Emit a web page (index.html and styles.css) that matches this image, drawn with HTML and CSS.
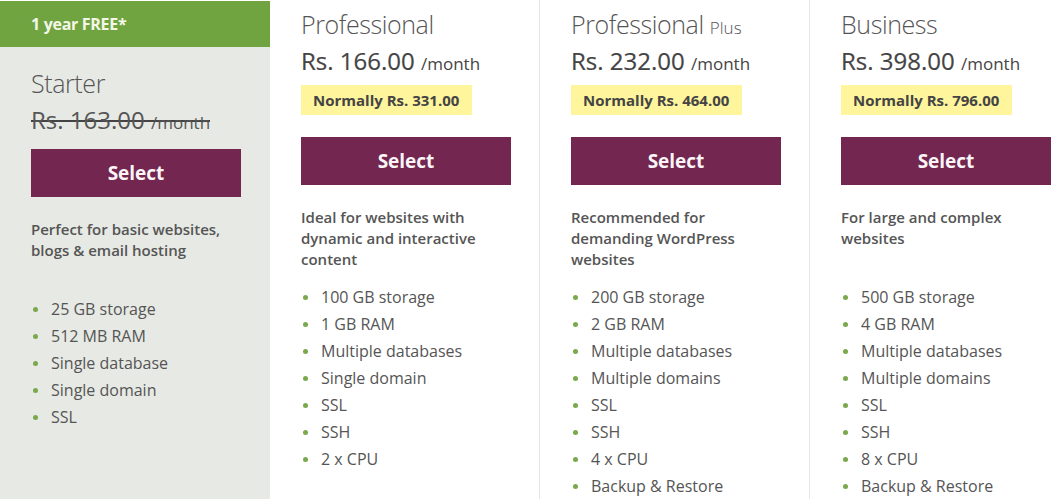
FILE: index.html
```html
<!DOCTYPE html>
<html lang="en">
<head>
<meta charset="utf-8">
<title>Hosting plans</title>
<link rel="stylesheet" href="styles.css">
</head>
<body>
<div class="plans">
  <section class="plan plan--starter">
    <div class="plan-flag">1 year FREE*</div>
    <div class="plan-body">
      <h2 class="plan-title">Starter</h2>
      <del class="plan-price plan-price--old">Rs. 163.00 <span class="per">/month</span></del>
      <a class="btn btn--tight">Select</a>
      <p class="plan-desc">Perfect for basic websites, blogs &amp; email hosting</p>
      <ul class="features">
        <li>25 GB storage</li>
        <li>512 MB RAM</li>
        <li>Single database</li>
        <li>Single domain</li>
        <li>SSL</li>
      </ul>
    </div>
  </section>
  <section class="plan plan--bordered">
    <div class="plan-body">
      <h2 class="plan-title">Professional</h2>
      <div class="plan-price">Rs. 166.00 <span class="per">/month</span></div>
      <div class="badge">Normally Rs. 331.00</div>
      <a class="btn">Select</a>
      <p class="plan-desc">Ideal for websites with dynamic and interactive content</p>
      <ul class="features">
        <li>100 GB storage</li>
        <li>1 GB RAM</li>
        <li>Multiple databases</li>
        <li>Single domain</li>
        <li>SSL</li>
        <li>SSH</li>
        <li>2 x CPU</li>
      </ul>
    </div>
  </section>
  <section class="plan plan--bordered">
    <div class="plan-body">
      <h2 class="plan-title">Professional <small>Plus</small></h2>
      <div class="plan-price">Rs. 232.00 <span class="per">/month</span></div>
      <div class="badge">Normally Rs. 464.00</div>
      <a class="btn">Select</a>
      <p class="plan-desc">Recommended for demanding WordPress websites</p>
      <ul class="features">
        <li>200 GB storage</li>
        <li>2 GB RAM</li>
        <li>Multiple databases</li>
        <li>Multiple domains</li>
        <li>SSL</li>
        <li>SSH</li>
        <li>4 x CPU</li>
        <li>Backup &amp; Restore</li>
      </ul>
    </div>
  </section>
  <section class="plan">
    <div class="plan-body">
      <h2 class="plan-title">Business</h2>
      <div class="plan-price">Rs. 398.00 <span class="per">/month</span></div>
      <div class="badge">Normally Rs. 796.00</div>
      <a class="btn">Select</a>
      <p class="plan-desc">For large and complex websites</p>
      <ul class="features">
        <li>500 GB storage</li>
        <li>4 GB RAM</li>
        <li>Multiple databases</li>
        <li>Multiple domains</li>
        <li>SSL</li>
        <li>SSH</li>
        <li>8 x CPU</li>
        <li>Backup &amp; Restore</li>
      </ul>
    </div>
  </section>
</div>
</body>
</html>
```
FILE: styles.css
```css
* { box-sizing: border-box; }
html, body {
  margin: 0;
  padding: 0;
  background: #fff;
  overflow: hidden;
  height: 499px;
}
body {
  font-family: "Open Sans", "Liberation Sans", sans-serif;
  color: #555;
}
.plans {
  display: grid;
  grid-template-columns: repeat(4, 270px);
  width: 1080px;
  min-height: 499px;
  align-items: stretch;
}
.plan {
  display: flex;
  flex-direction: column;
}
.plan--bordered {
  border-right: 1px solid #e6e6e6;
}
.plan--starter {
  background: #e7e9e4;
  border-top: 1px solid #fff;
}
.plan-flag {
  background: #70a440;
  color: #f4f7e6;
  font-weight: 700;
  font-size: 16px;
  height: 46px;
  line-height: 46px;
  padding-left: 31px;
  letter-spacing: -0.3px;
}
.plan-body {
  padding: 9px 0 0 31px;
  display: flex;
  flex-direction: column;
  align-items: flex-start;
}
.plan--starter .plan-body {
  padding-top: 21px;
}
.plan-title {
  margin: 0;
  font-size: 25px;
  font-weight: 300;
  line-height: 30px;
  height: 30px;
  color: #555;
  letter-spacing: -0.4px;
}
.plan-title small {
  font-size: 17px;
  line-height: 1;
  letter-spacing: 0;
}
.plan-price {
  display: block;
  margin-top: 7px;
  font-size: 24px;
  line-height: 30px;
  color: #444;
  -webkit-text-stroke: 0.2px #444;
}
.plan-price .per {
  font-size: 17px;
  -webkit-text-stroke: 0;
}
.plan-price--old {
  color: #555;
  text-decoration: none;
  -webkit-text-stroke: 0;
  background: linear-gradient(#444, #444) no-repeat 0 15px / 100% 2px;
}
.badge {
  margin-top: 6px;
  background: #fff59c;
  color: #444;
  font-weight: 700;
  font-size: 15px;
  height: 30px;
  line-height: 30px;
  padding: 0 13px 0 12px;
}
.btn {
  display: block;
  margin-top: 22px;
  width: 210px;
  height: 48px;
  line-height: 48px;
  background: #722650;
  color: #fbf5f8;
  text-align: center;
  font-weight: 700;
  font-size: 19px;
  cursor: pointer;
}
.btn--tight {
  margin-top: 11px;
}
.plan-desc {
  margin: 22px 0 0 0;
  width: 205px;
  height: 63px;
  font-size: 15px;
  font-weight: 600;
  line-height: 21px;
  color: #555;
}
.features {
  list-style: none;
  margin: 14px 0 0 0;
  padding: 0;
  font-size: 16px;
  line-height: 27px;
  color: #555;
}
.features li {
  display: flex;
  align-items: center;
}
.features li::before {
  content: "";
  width: 5px;
  height: 5px;
  border-radius: 50%;
  background: #7aa84d;
  margin: 0 13px 0 2px;
  flex: none;
}
```
